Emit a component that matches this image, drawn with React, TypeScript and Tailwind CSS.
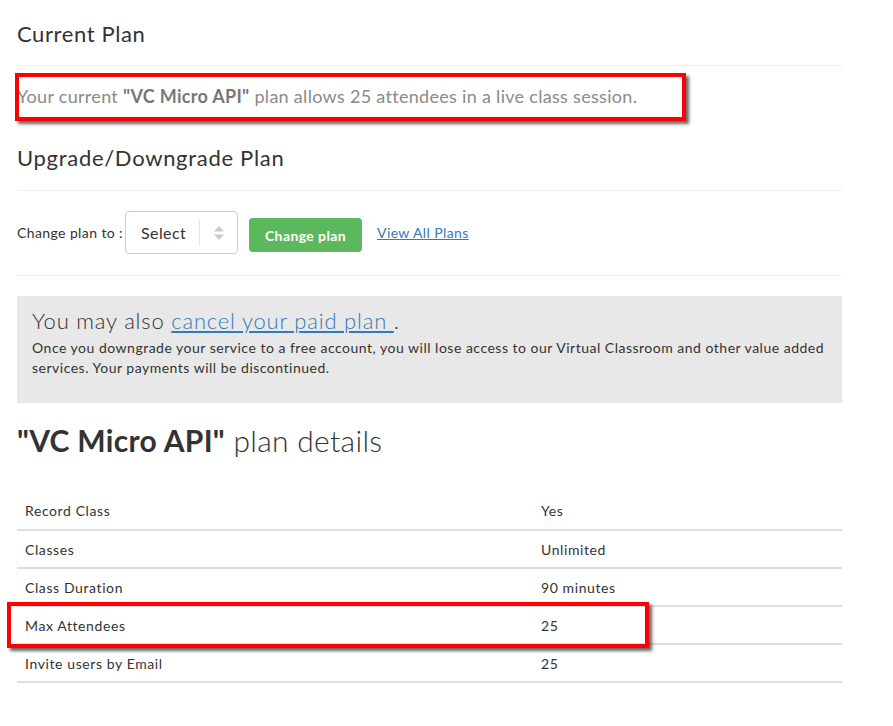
import React from 'react'

const rows = [
  ['Record Class', 'Yes'],
  ['Classes', 'Unlimited'],
  ['Class Duration', '90 minutes'],
  ['Max Attendees', '25'],
  ['Invite users by Email', '25'],
]

export default function App() {
  return (
    <main className="relative min-h-screen bg-white text-[#333] font-['Lato',sans-serif]">
      <div className="ml-[17px] w-[825px] pt-[20px]">
        {/* Current plan */}
        <h3 className="text-[22px] leading-[28px] tracking-[0.6px]">Current Plan</h3>
        <hr className="mt-[17px] border-t border-[#eee]" />
        <p className="mt-[18px] text-[18px] leading-[24px] tracking-[0.3px] text-[#8a8a8a]">
          Your current <b className="text-[#777]">"VC Micro API"</b> plan allows 25 attendees in a live class session.
        </p>

        {/* Upgrade / downgrade */}
        <h3 className="mt-[36px] text-[22px] leading-[28px] tracking-[0.7px]">Upgrade/Downgrade Plan</h3>
        <hr className="mt-[18px] border-t border-[#eee]" />
        <div className="mt-[20px] flex items-center h-[43px] text-[14px] tracking-[0.4px]">
          <span className="w-[108px]">Change plan to :</span>
          <div className="flex items-center h-[43px] w-[113px] rounded border border-[#ccc] bg-white">
            <span className="pl-[15px] w-[73px] text-[16px]">Select</span>
            <span className="h-[26px] border-l border-[#e5e5e5]" />
            <svg width="12" height="18" viewBox="0 0 12 18" className="ml-[13px]">
              <path d="M6 2 L11 7.5 H1 Z" fill="#ccc" />
              <path d="M6 16 L11 10.5 H1 Z" fill="#ccc" />
            </svg>
          </div>
          <button className="ml-[11px] mt-[5px] h-[34px] w-[113px] rounded bg-[#5cb85c] text-white font-bold text-[14px]">
            Change plan
          </button>
          <a href="#" className="ml-[15px] text-[#337ab7] underline">View All Plans</a>
        </div>
        <hr className="mt-[21px] border-t border-[#eee]" />

        {/* Cancel notice */}
        <div className="mt-[20px] h-[107px] bg-[#e8e8e8] pl-[15px] pr-[2px] pt-[11px]">
          <p className="text-[22px] leading-[28px] font-light tracking-[0.8px]">
            You may also{' '}
            <a href="#" className="text-[#337ab7] underline">cancel your paid plan </a>.
          </p>
          <p className="mt-[3px] text-[14px] leading-[20px] tracking-[0.5px] text-[#333]">
            Once you downgrade your service to a free account, you will lose access to our Virtual Classroom and other value added services. Your payments will be discontinued.
          </p>
        </div>

        {/* Plan details */}
        <h2 className="mt-[19px] text-[30px] leading-[36px] font-light tracking-[0.3px]">
          <b className="font-bold">"VC Micro API"</b> plan details
        </h2>
        <table className="mt-[34px] w-full text-[14px] tracking-[0.6px]">
          <tbody>
            {rows.map(([k, v]) => (
              <tr key={k} className="h-[38px] border-b-2 border-[#ddd]">
                <td className="w-[524px] pl-[8px]">{k}</td>
                <td>{v}</td>
              </tr>
            ))}
          </tbody>
        </table>
      </div>

      {/* annotation boxes */}
      <div className="absolute left-[15px] top-[73px] w-[671px] h-[48px] border-4 border-[#f00] shadow-[3px_3px_3px_rgba(0,0,0,0.6)]" />
      <div className="absolute left-[7px] top-[602px] w-[642px] h-[46px] border-4 border-[#f00] shadow-[3px_3px_3px_rgba(0,0,0,0.6)]" />
    </main>
  )
}
